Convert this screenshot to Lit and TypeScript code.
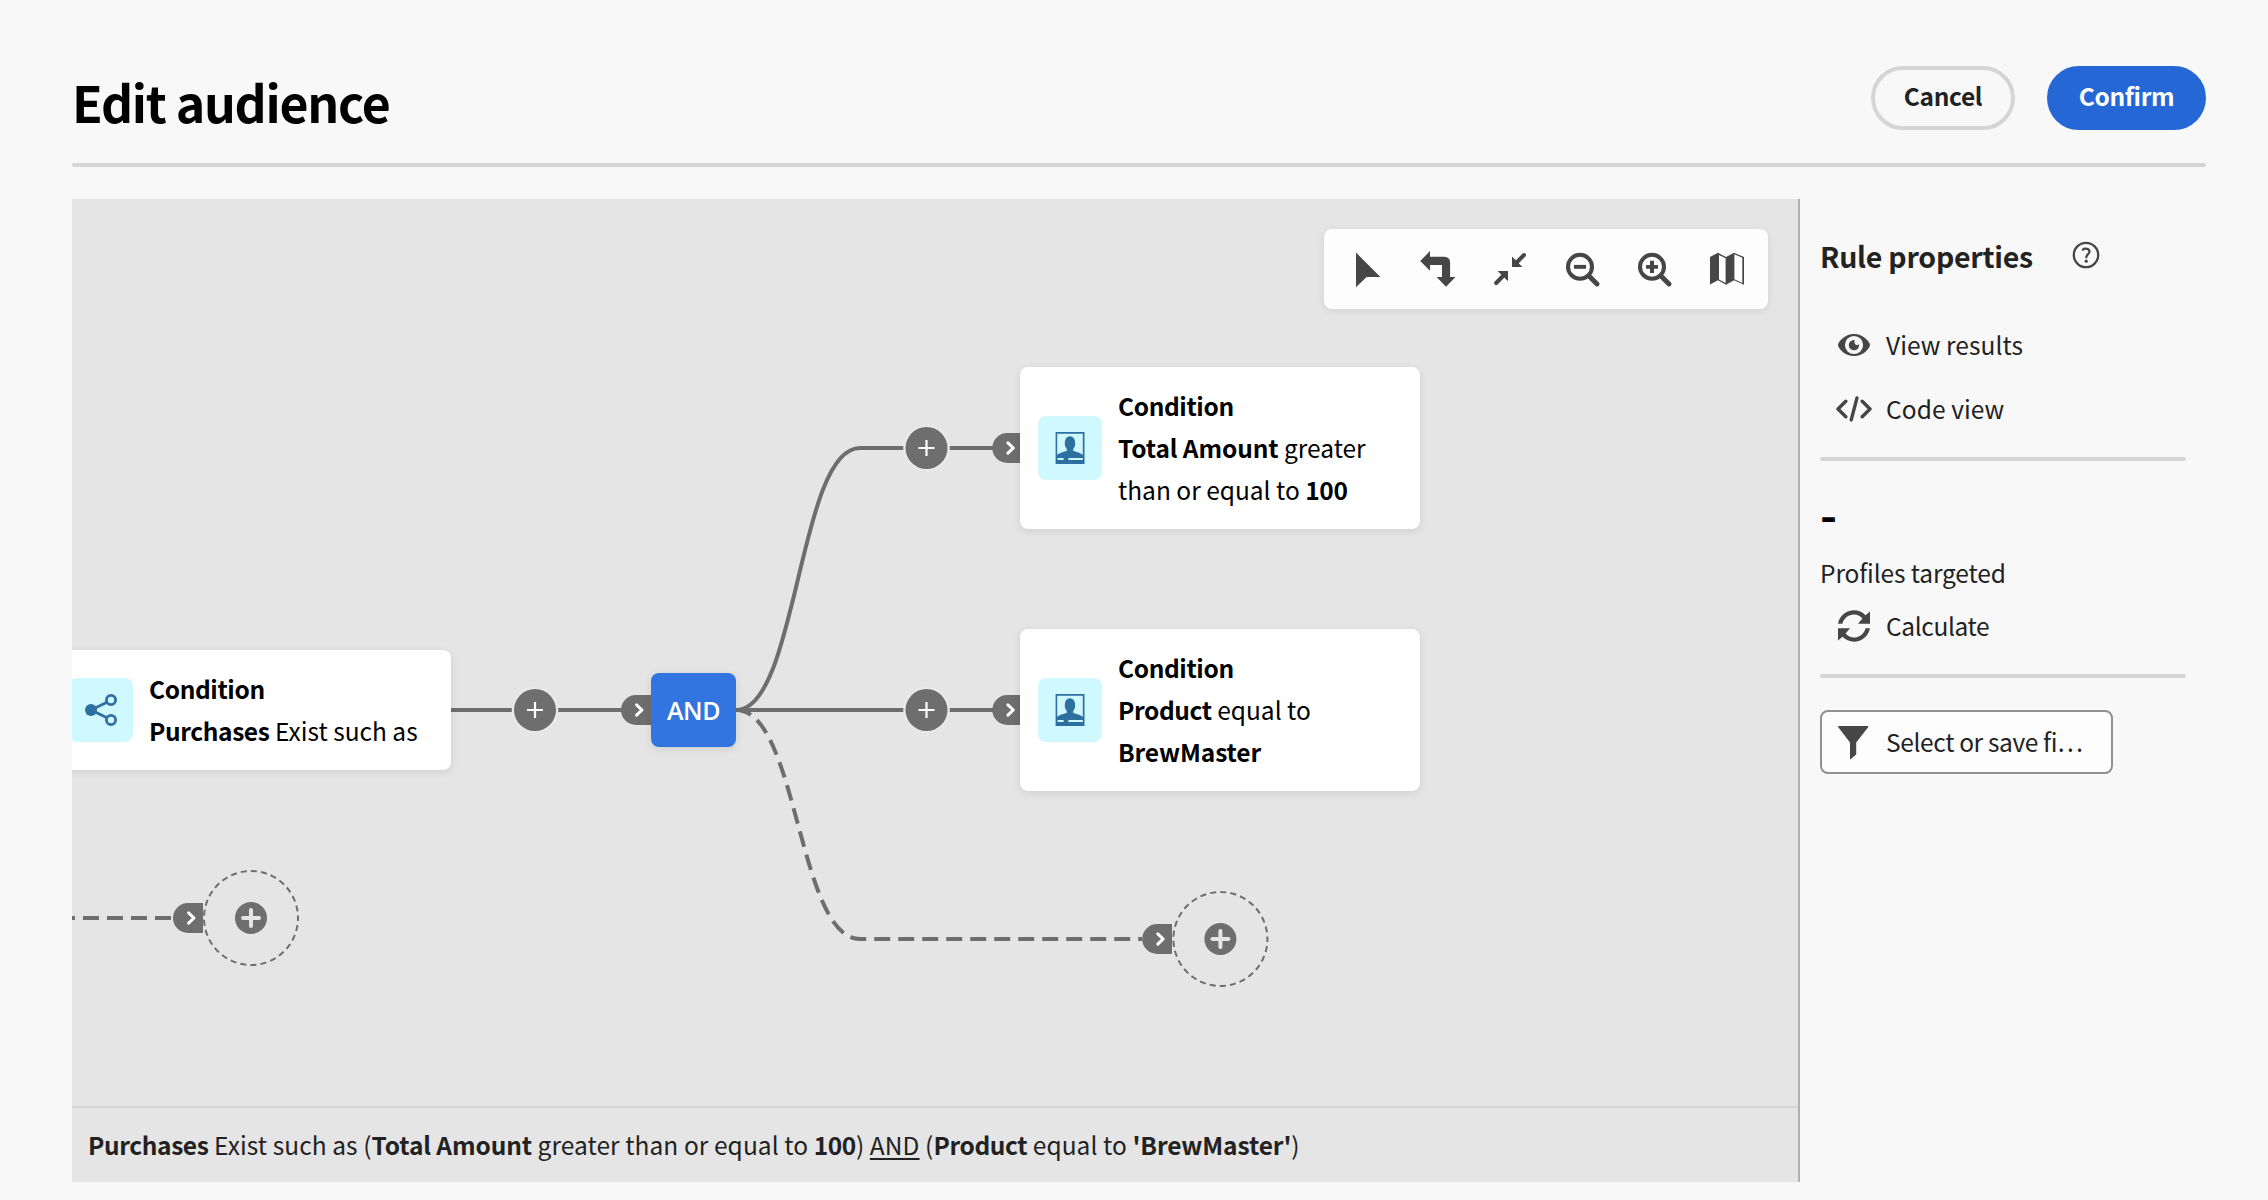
import { LitElement, html, css, svg } from "lit";
import { customElement, property } from "lit/decorators.js";

const toolIcons = [
  { name: "Select", art: svg`<path d="M8 1.6V36.2L18.6 26.1H32.4Z"/>` },
  {
    name: "Change direction",
    art: svg`<path d="M.2 10 10 .1V5.7H24.5a5.6 5.6 0 0 1 5.6 5.6V26H35.5L26 35.8 16.6 26H22V14H10V19.8Z"/>`,
  },
  {
    name: "Collapse",
    art: svg`<path d="M20 5.6V16H30.4ZM16 30.2V20H5.6Z"/><path class="line" d="M32 4 25 11M4.2 32 11 25"/>`,
  },
  {
    name: "Zoom out",
    art: svg`<circle class="line" cx="16" cy="15.8" r="12"/><path class="line thick" d="M26 26 33 33"/><path d="M10 13.9h12v3.9H10z"/>`,
  },
  {
    name: "Zoom in",
    art: svg`<circle class="line" cx="16" cy="15.8" r="12"/><path class="line thick" d="M26 26 33 33"/><path d="M10 13.9h4v-4.1h4v4.1h4v3.9h-4v4.1h-4v-4.1h-4z"/>`,
  },
  {
    name: "Map",
    art: svg`<path d="M2 5.9 10 1.8V29.3L2 33.4ZM18 6.1 26 1.8V29.3L18 33.8Z"/><path d="M10 1.8 18 6.1V33.8L10 29.3ZM11 4V28.4L17.6 32V7.2ZM26 1.8 36 6.1V33.8L26 29.3ZM26.4 3.2V28.2L34.3 31.9V6.8Z" fill-rule="evenodd"/>`,
  },
];

@customElement("flow-card")
class FlowCard extends LitElement {
  @property() kind = "profile";

  static styles = css`
    :host {
      display: flex;
      align-items: center;
      gap: 16px;
      box-sizing: border-box;
      padding: 18px;
      border-radius: 8px;
      background: #fff;
      box-shadow: 0 2px 8px rgba(0, 0, 0, 0.1);
      color: #000;
    }
    .tile {
      flex: none;
      width: 64px;
      height: 64px;
      border-radius: 8px;
      background: #cff8ff;
    }
    .tile svg {
      display: block;
      fill: #2d6f9f;
    }
    .ring {
      fill: none;
      stroke: #2d6f9f;
      stroke-width: 2.8;
    }
    .text {
      white-space: nowrap;
    }
  `;

  render() {
    const art =
      this.kind === "share"
        ? svg`<circle cx="22" cy="32" r="6"/><path class="ring" d="M37.5 24.5 22 32 37.500 39.500"/><circle class="ring" cx="42" cy="22" r="4.6"/><circle class="ring" cx="42" cy="42" r="4.6"/>`
        : svg`<path fill-rule="evenodd" d="M17.6 16h28.9v32H17.6ZM19.200 17.800V39c1.500-1.700 6.200-3.100 9.600-3.900v-2.200c-1.400-1.500-2-3.400-2-5.400 0-4.400 2-7.300 5.200-7.300s5.200 2.900 5.200 7.300c0 2-.6 3.900-2 5.400v2.200c3.400.8 8.100 2.200 9.600 3.900V17.800ZM19.600 42v2h6v-2ZM30.400 42v2h14.400v-2Z"/>`;
    return html`<div class="tile"><svg width="64" height="64">${art}</svg></div>
      <div class="text"><slot></slot></div>`;
  }
}

@customElement("app-root")
class AppRoot extends LitElement {
  static styles = css`
    :host {
      display: block;
      box-sizing: border-box;
      height: 1200px;
      padding: 0 62px 0 72px;
      background: #f8f8f8;
      color: #222;
      font: 400 24.5px/42px "Noto Sans CJK SC", "Open Sans", sans-serif;
      overflow: hidden;
    }
    b {
      font-weight: 700;
      letter-spacing: -0.38px;
    }
    b.wide {
      letter-spacing: -0.1px;
    }
    header {
      display: flex;
      align-items: flex-start;
      gap: 32px;
      box-sizing: border-box;
      height: 163px;
      padding-top: 66px;
    }
    h1 {
      flex: 1;
      margin: 5px 0 0;
      color: #000;
      font-size: 50px;
      line-height: 60px;
      font-weight: 700;
      letter-spacing: -1.25px;
    }
    .btn {
      display: flex;
      align-items: center;
      justify-content: center;
      box-sizing: border-box;
      height: 64px;
      padding: 0 0 4px;
      border: 4px solid #d5d5d5;
      border-radius: 32px;
      background: none;
      color: #222;
      font: inherit;
      font-weight: 700;
      letter-spacing: -0.33px;
    }
    .cancel {
      width: 144px;
    }
    .confirm {
      width: 159px;
      border-color: #2667d6;
      background: #2667d6;
      color: #fff;
    }
    .rule {
      height: 4px;
      border-radius: 2px;
      background: #d5d5d5;
    }
    main {
      display: flex;
      height: 983px;
      margin-top: 32px;
    }
    .builder {
      display: flex;
      flex-direction: column;
      box-sizing: border-box;
      width: 1728px;
      border-right: 2px solid #b1b1b1;
      background: #e5e5e5;
    }
    .canvas {
      position: relative;
      flex: 1;
      overflow: hidden;
    }
    .summary {
      display: flex;
      align-items: center;
      height: 74px;
      padding-left: 16px;
      border-top: 2px solid #d5d5d5;
      white-space: pre;
      letter-spacing: 0.07px;
    }
    .summary u {
      text-decoration-thickness: 1.5px;
      text-underline-offset: 3px;
    }
    .wires {
      position: absolute;
      inset: 0;
      fill: none;
      stroke: #6e6e6e;
      stroke-width: 4;
    }
    .dash {
      stroke-dasharray: 16 8;
    }
    .halo {
      fill: #e9e9e9;
      stroke: none;
    }
    .solid {
      fill: #6e6e6e;
      stroke: none;
    }
    .plus {
      stroke: #fff;
      stroke-width: 2.2;
    }
    .plus.soft {
      stroke: #e5e5e5;
      stroke-width: 4;
      stroke-linecap: round;
    }
    .chev {
      stroke: #fff;
      stroke-width: 3;
      stroke-linecap: round;
      stroke-linejoin: round;
    }
    .ring {
      stroke-width: 2;
      stroke-dasharray: 6.1 4.083;
      stroke-dashoffset: 3.05;
    }
    .toolbar {
      position: absolute;
      left: 1252px;
      top: 30px;
      display: flex;
      align-items: center;
      justify-content: center;
      gap: 36px;
      width: 444px;
      height: 80px;
      border-radius: 8px;
      background: #fdfdfd;
      box-shadow: 0 2px 8px rgba(0, 0, 0, 0.08);
    }
    .ico {
      display: block;
      flex: none;
      fill: #464646;
    }
    .line {
      fill: none;
      stroke: #464646;
      stroke-width: 4;
      stroke-linecap: round;
      stroke-linejoin: round;
    }
    .thick {
      stroke-width: 4.8;
    }
    .code {
      stroke-width: 3.4;
    }
    .hair {
      stroke-width: 2.3;
    }
    .node {
      position: absolute;
      width: 400px;
    }
    .total {
      left: 948px;
      top: 168px;
    }
    .product {
      left: 948px;
      top: 430px;
    }
    .purchases {
      left: -21px;
      top: 451px;
    }
    .and {
      position: absolute;
      left: 579px;
      top: 474px;
      display: flex;
      align-items: center;
      justify-content: center;
      width: 85px;
      height: 74px;
      border-radius: 8px;
      background: #3274e0;
      box-shadow: 0 2px 8px rgba(0, 0, 0, 0.1);
      color: #fff;
      font: 600 25px/30px "Open Sans", sans-serif;
      letter-spacing: -0.4px;
    }
    aside {
      display: flex;
      flex-direction: column;
      width: 366px;
      padding-left: 20px;
    }
    .head {
      display: flex;
      align-items: center;
      gap: 37px;
      height: 112px;
      margin-bottom: 2px;
    }
    h2 {
      margin: 2px 0 0;
      font-size: 28.5px;
      line-height: 40px;
      font-weight: 700;
      letter-spacing: -0.25px;
    }
    .action {
      display: flex;
      align-items: center;
      gap: 14px;
      height: 64px;
      padding-left: 16px;
      letter-spacing: 0.08px;
    }
    .gap {
      margin-top: 16px;
    }
    .action.tight {
      letter-spacing: -0.36px;
    }
    .count {
      height: 83px;
      padding-top: 7px;
      color: #000;
      font-size: 46px;
      font-weight: 700;
      line-height: 90px;
    }
    .label {
      height: 43px;
      line-height: 43px;
      letter-spacing: -0.12px;
    }
    .filter {
      display: flex;
      align-items: center;
      gap: 14px;
      box-sizing: border-box;
      width: 293px;
      height: 64px;
      margin-top: 32px;
      padding: 0 0 0 14px;
      border: 2px solid #909090;
      border-radius: 8px;
      background: #fdfdfd;
      letter-spacing: -0.36px;
    }
  `;

  private port(x: number, y: number, w: number) {
    return svg`<path class="solid" d="M${x + w} ${y - 15}H${x + 15}a15 15 0 0 0 0 30H${x + w}Z"/>
      <path class="chev" d="M${x + 15.6} ${y - 5.2} ${x + 21} ${y} ${x + 15.6} ${y + 5.2}"/>`;
  }

  private adder(x: number, y: number) {
    return svg`<circle class="halo" cx=${x} cy=${y} r="23.3"/><circle class="solid" cx=${x} cy=${y} r="21"/>
      <path class="plus" d="M${x - 8} ${y}h16M${x} ${y - 8}v16"/>`;
  }

  private slotRing(x: number, y: number) {
    return svg`<circle class="ring" cx=${x} cy=${y} r="47"/><circle class="solid" cx=${x} cy=${y} r="16"/>
      <path class="plus soft" d="M${x - 8} ${y}h16M${x} ${y - 8}v16"/>`;
  }

  render() {
    return html`
      <header>
        <h1>Edit audience</h1>
        <button class="btn cancel">Cancel</button>
        <button class="btn confirm">Confirm</button>
      </header>
      <div class="rule"></div>
      <main>
        <section class="builder">
          <div class="canvas">
            <svg class="wires" width="1726" height="907">
              <path d="M379 511H550M664 511H921M664 511C726 511 726 249 788 249H921" />
              <path class="dash" d="M664 511C726 511 726 740 788 740H1070" />
              <path class="dash" d="M-13 719H101" />
              ${this.adder(463, 511)} ${this.adder(854.5, 511)} ${this.adder(854.5, 249)}
              ${this.port(549, 511, 30)} ${this.port(920.3, 511, 29)} ${this.port(920.3, 249, 29)}
              ${this.port(1070.2, 740, 29.8)} ${this.port(101, 719, 30)}
              ${this.slotRing(179, 719)} ${this.slotRing(1148.4, 740)}
            </svg>
            <flow-card class="node total">
              <b>Condition</b><br /><b class="wide">Total Amount</b> greater<br />than or equal to <b>100</b>
            </flow-card>
            <flow-card class="node product">
              <b>Condition</b><br /><b>Product</b> equal to<br /><b class="wide">BrewMaster</b>
            </flow-card>
            <flow-card class="node purchases" kind="share">
              <b>Condition</b><br /><b>Purchases</b> Exist such as
            </flow-card>
            <div class="and">AND</div>
            <div class="toolbar">
              ${toolIcons.map(
                (t) => html`<svg class="ico" width="36" height="36" aria-label=${t.name}>${t.art}</svg>`
              )}
            </div>
          </div>
          <div class="summary"><b>Purchases</b> Exist such as (<b class="wide">Total Amount</b> greater than or equal to <b>100</b>) <u>AND</u> (<b>Product</b> equal to <b class="wide">'BrewMaster'</b>)</div>
        </section>
        <aside>
          <div class="head">
            <h2>Rule properties</h2>
            <svg class="ico" width="32" height="32">
              <circle class="line hair" cx="16" cy="16" r="12.2" />
              <path class="line hair" d="M12.9 10.600c1.900-1.500 6.600-1.200 6.600 1.900 0 2.600-3.200 3-3.200 5.800" />
              <circle cx="16.2" cy="22.2" r="1.6" />
            </svg>
          </div>
          <div class="action">
            <svg class="ico" width="36" height="36">
              <path fill-rule="evenodd" d="M18 6.900C8.500 6.900 2 15 2 18s6.500 11.100 16 11.100S34 21 34 18 27.500 6.900 18 6.900ZM18 8.900a9.100 9.100 0 0 1 0 18.200 9.100 9.100 0 0 1 0-18.200ZM18 12.900a5.200 5.200 0 1 0 5.100 4.300 2.900 2.900 0 0 1-4.300-3.800Z" />
            </svg>
            View results
          </div>
          <div class="action">
            <svg class="ico" width="36" height="36">
              <path class="line code" d="M9.800 10.200 2 18l7.800 7.800M26.200 10.200 34 18l-7.800 7.800" />
              <path class="line code" d="M21 6.900 15.200 28.900" />
            </svg>
            Code view
          </div>
          <div class="rule gap"></div>
          <div class="count">-</div>
          <div class="label">Profiles targeted</div>
          <div class="action tight">
            <svg class="ico" width="36" height="36">
              <path d="M2 15.700C3.400 8 10.200 2.300 18 2.300c4.400 0 8.500 1.800 11.500 4.900L34 3.500V15.700H22l4.400-5.200C24.200 7.900 21.200 6.400 18 6.400c-5.600 0-10.200 3.800-11.600 9.300ZM34 20.300C32.600 28 25.800 33.700 18 33.700c-4.400 0-8.500-1.800-11.500-4.900L2 32.500V20.300H14l-4.400 5.200c2.200 2.600 5.200 4.100 8.400 4.100 5.600 0 10.200-3.800 11.600-9.300Z" />
            </svg>
            Calculate
          </div>
          <div class="rule gap"></div>
          <div class="filter">
            <svg class="ico" width="36" height="36">
              <path d="M3 2H31.500c.8 0 1.100.7.600 1.300L20.200 18.500V30.500L14.600 35.200c-.4.300-.6 0-.6-.4V18.500L2.300 3.300C1.800 2.700 2.200 2 3 2Z" />
            </svg>
            Select or save fi…
          </div>
        </aside>
      </main>
    `;
  }
}
